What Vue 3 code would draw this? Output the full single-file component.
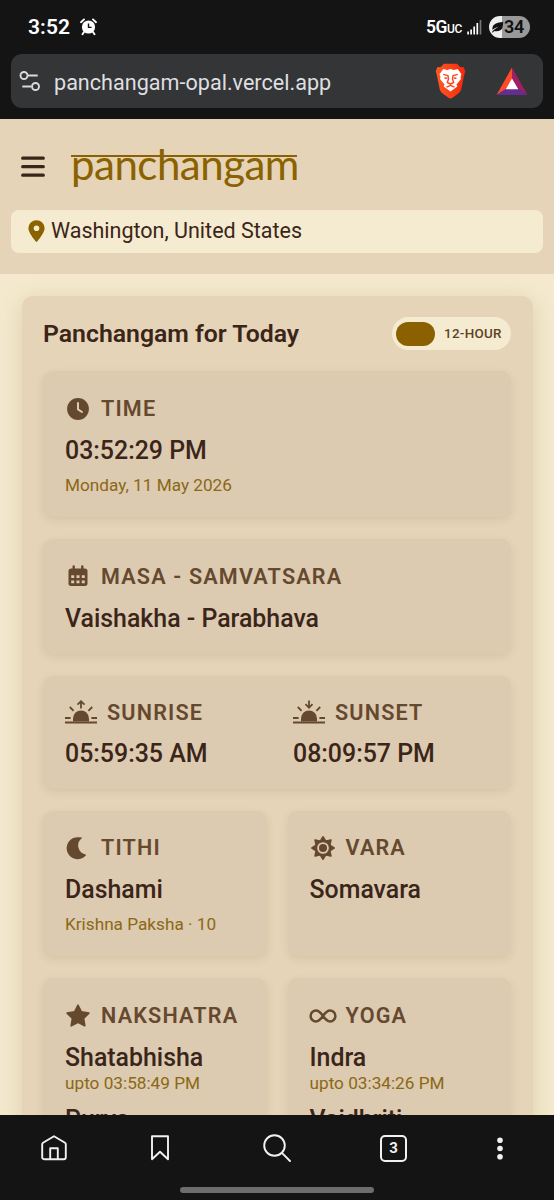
<script setup>
const nakshatra = [
  { name: 'Shatabhisha', until: 'upto 03:58:49 PM' },
  { name: 'Purva', until: '' },
]
const yoga = [
  { name: 'Indra', until: 'upto 03:34:26 PM' },
  { name: 'Vaidhriti', until: '' },
]
const rays = [0, 45, 90, 135, 180, 225, 270, 315]
</script>

<template>
  <div class="screen">
    <div class="chrome-top">
      <div class="status">
        <span class="clock">3:52</span>
        <svg class="alarm" width="17" height="18" viewBox="0 0 17 18">
          <circle cx="8.500" cy="9" r="6.600" fill="#fff" />
          <path d="M1 4.200 4 1.400M16 4.200 13 1.400M4 14 2.500 16.200M13 14l1.500 2.200" stroke="#fff" stroke-width="1.900" stroke-linecap="round" fill="none" />
          <path d="M8.500 5.400V9.400H11.600" stroke="#141414" stroke-width="1.400" fill="none" />
        </svg>
        <span class="net">5G<small>UC</small></span>
        <svg class="signal" width="15" height="16" viewBox="0 0 15 16">
          <path d="M1.100 12.500V15.500M4.100 10.500V15.500M7.200 7.500V15.500M10.300 4V15.500" stroke="#fff" stroke-width="1.700" />
          <path d="M13.500 1V15.500" stroke="#777" stroke-width="1.700" />
        </svg>
        <span class="battery">
          <svg width="13" height="12" viewBox="0 0 13 12">
            <path d="M.8 11.200C2.200 9.300 4 7.700 7.500 5.800 4.500 6.700 2.700 7.900 1.600 9 .5 4.500 4 1.200 12.200 1c-.1 2-.3 4.200-1 6.300C10.300 9.800 6 10.800 3.300 9.900L1.800 11.500Z" fill="#111" />
          </svg>
          <b>34</b>
        </span>
      </div>
      <div class="address">
        <svg class="tune" width="22" height="20" viewBox="0 0 22 20" fill="none" stroke="#d9dadb" stroke-width="1.900">
          <circle cx="5" cy="4.500" r="3.500" /><path d="M8.400 4.500H18.700M3.300 15.500H12.200" />
          <circle cx="16.500" cy="15.500" r="3.500" />
        </svg>
        <span class="url">panchangam-opal.vercel.app</span>
        <svg class="brave" width="31" height="36" viewBox="0 0 31 36">
          <defs>
            <linearGradient id="lion"><stop offset="0" stop-color="#ff5a24" /><stop offset="1" stop-color="#f5280c" /></linearGradient>
          </defs>
          <path d="M9 .8H22L25.500 4.300 28.500 4 30.300 8.200 29.300 11.500 26.200 26.500Q25.500 29 23 30.800L17.500 34.800Q15.500 36 13.500 34.800L8 30.800Q5.500 29 4.800 26.500L1.700 11.500.7 8.200 2.500 4 5.500 4.300Z" fill="url(#lion)" />
          <path d="M8.300 6.100 12.200 6.900 15.500 6 18.800 6.900 22.700 6.100 26.500 11.200 25.500 14 26 16 21.500 21.500 22.300 23.500 15.500 28.500 8.700 23.500 9.500 21.500 5 16 5.500 14 4.500 11.200Z" fill="#fff" />
          <path d="M8.300 11.300 13 12.600 13.500 16 12.300 19.500 15.500 21 18.700 19.500 17.500 16 18 12.600 22.700 11.300M9.500 15.300 12.200 15M21.500 15.300 18.800 15M11.500 24.200 15.500 22.300 19.500 24.200" stroke="#fb4520" stroke-width="1.400" fill="none" stroke-linejoin="round" />
        </svg>
        <svg class="bat" width="32" height="29" viewBox="0 0 32 29">
          <path d="M16 .5V12L10 22 .5 28Z" fill="#ff4b2b" />
          <path d="M16 .5 31.500 28 22 22 16 12Z" fill="#9e1f63" />
          <path d="M.5 28 10 22H22L31.500 28Z" fill="#662d91" />
          <path d="M16 11.500 22.300 22.300H9.700Z" fill="#fff" />
        </svg>
      </div>
    </div>

    <header class="site-head">
      <div class="brand-row">
        <svg class="menu" width="24" height="22" viewBox="0 0 24 22">
          <path d="M1.700 2.200H22.300M1.700 10.700H22.300M1.700 19.200H22.300" stroke="#3b2519" stroke-width="3.200" stroke-linecap="round" />
        </svg>
        <div class="brand"><span>panchangam</span></div>
      </div>
      <div class="location">
        <svg width="17" height="22" viewBox="0 0 17 22">
          <path fill-rule="evenodd" d="M8.500.2A8.100 8.100 0 0 0 .4 8.300C.4 12.500 6 19.300 7.700 21.400Q8.500 22.200 9.300 21.400C11 19.300 16.600 12.500 16.600 8.300A8.100 8.100 0 0 0 8.500.2ZM8.500 5.500A2.800 2.800 0 1 1 8.500 11.100 2.800 2.800 0 0 1 8.500 5.500Z" fill="#8b6200" />
        </svg>
        <span>Washington, United States</span>
      </div>
    </header>

    <main class="page">
      <section class="panel">
        <div class="panel-head">
          <h2>Panchangam for Today</h2>
          <div class="toggle"><i></i><span>12-HOUR</span></div>
        </div>

        <div class="cards">
          <article class="card wide">
            <div class="label">
              <svg width="26" height="26" viewBox="0 0 26 26"><circle cx="13" cy="13" r="10.900" fill="#65492f" /><path d="M13 7V13.300L17 16" stroke="#dccab1" stroke-width="2" stroke-linecap="round" stroke-linejoin="round" fill="none" /></svg>
              <span>TIME</span>
            </div>
            <div class="value">03:52:29 PM</div>
            <div class="sub">Monday, 11 May 2026</div>
          </article>

          <article class="card wide">
            <div class="label">
              <svg width="26" height="26" viewBox="0 0 26 26">
                <path d="M6.200 5.500H19.800Q22.500 5.500 22.500 8V20.500Q22.500 23 19.800 23H6.200Q3.500 23 3.500 20.500V8Q3.500 5.500 6.200 5.500Z" fill="#65492f" />
                <path d="M8.700 3.500V7M17.300 3.500V7" stroke="#65492f" stroke-width="2.400" stroke-linecap="round" />
                <path d="M6.200 12.300h3v2.600h-3zM11.500 12.300h3v2.600h-3zM16.800 12.300h3v2.600h-3zM6.200 17.600h3v2.600h-3zM11.500 17.600h3v2.600h-3zM16.800 17.600h3v2.600h-3z" fill="#dccab1" />
              </svg>
              <span>MASA - SAMVATSARA</span>
            </div>
            <div class="value">Vaishakha - Parabhava</div>
          </article>

          <article class="card wide sun">
            <div>
              <div class="label">
                <svg width="32" height="26" viewBox="0 0 32 26" fill="none" stroke="#65492f" stroke-width="1.800">
                  <path d="M8 21.500V18.500A8 8 0 0 1 24 18.500V21.500Z" fill="#65492f" stroke="none" />
                  <path d="M0 22.500H32M0 18H5.600M26.400 18H32M4.800 7 8.600 10.800M27.200 7 23.400 10.800M16 8.500V1.500M12.500 4.600 16 1.200 19.500 4.600" />
                </svg>
                <span>SUNRISE</span>
              </div>
              <div class="value">05:59:35 AM</div>
            </div>
            <div>
              <div class="label">
                <svg width="32" height="26" viewBox="0 0 32 26" fill="none" stroke="#65492f" stroke-width="1.800">
                  <path d="M8 21.500V18.500A8 8 0 0 1 24 18.500V21.500Z" fill="#65492f" stroke="none" />
                  <path d="M0 22.500H32M0 18H5.600M26.400 18H32M4.800 7 8.600 10.800M27.200 7 23.400 10.800M16 .5V7.500M12.500 4.200 16 7.800 19.500 4.200" />
                </svg>
                <span>SUNSET</span>
              </div>
              <div class="value">08:09:57 PM</div>
            </div>
          </article>

          <article class="card">
            <div class="label">
              <svg width="26" height="26" viewBox="0 0 26 26"><path d="M13.800 2.200A11 11 0 1 0 21 20.300Q21.300 19.500 20.500 19.400A9 9 0 0 1 16.500 3.600Q17.500 3 16.700 2.600 15.300 2.100 13.800 2.200Z" fill="#65492f" /></svg>
              <span>TITHI</span>
            </div>
            <div class="value">Dashami</div>
            <div class="sub">Krishna Paksha · 10</div>
          </article>

          <article class="card">
            <div class="label">
              <svg width="26" height="26" viewBox="0 0 26 26">
                <path v-for="a in rays" :key="a" d="M9.300 6.200 12.200 1.500Q13 .3 13.800 1.500L16.700 6.200Z" fill="#65492f" :transform="`rotate(${a} 13 13)`" />
                <circle cx="13" cy="13" r="7" fill="#dccab1" stroke="#65492f" stroke-width="2.300" />
                <circle cx="13" cy="13" r="4" fill="#65492f" />
              </svg>
              <span>VARA</span>
            </div>
            <div class="value">Somavara</div>
          </article>

          <article class="card">
            <div class="label">
              <svg width="26" height="26" viewBox="0 0 26 26"><path d="M13 2.300 16.300 8.900 23.800 10.100 18.500 15.300 19.700 22.700 13 19.300 6.300 22.700 7.500 15.300 2.200 10.100 9.700 8.900Z" fill="#65492f" stroke="#65492f" stroke-width="1.800" stroke-linejoin="round" /></svg>
              <span>NAKSHATRA</span>
            </div>
            <div v-for="n in nakshatra" :key="n.name" class="entry">
              <div class="value">{{ n.name }}</div>
              <div class="until">{{ n.until }}</div>
            </div>
          </article>

          <article class="card">
            <div class="label">
              <svg class="infinity" width="26" height="26" viewBox="0 0 26 26"><path d="M13 13C10.500 9.500 9 7.600 6 7.600A5.400 5.400 0 0 0 6 18.400C9 18.400 10.500 16.500 13 13S17 7.600 20 7.600A5.400 5.400 0 0 1 20 18.400C17 18.400 15.500 16.500 13 13Z" fill="none" stroke="#65492f" stroke-width="2.500" /></svg>
              <span>YOGA</span>
            </div>
            <div v-for="y in yoga" :key="y.name" class="entry">
              <div class="value">{{ y.name }}</div>
              <div class="until">{{ y.until }}</div>
            </div>
          </article>
        </div>
      </section>
    </main>

    <nav class="chrome-bottom">
      <div class="tabs">
        <svg width="26" height="26" viewBox="0 0 26 26" fill="none" stroke="#f1f1f1" stroke-width="1.900" stroke-linejoin="round"><path d="M3.200 24.200Q1.200 24.200 1.200 22.200V9.300Q1.200 8.300 2 7.800L13 1.300 24 7.800Q24.800 8.300 24.800 9.300V22.200Q24.800 24.200 22.800 24.200ZM9.200 24V13.300H16.800V24" /></svg>
        <svg width="18" height="26" viewBox="0 0 18 26" fill="none" stroke="#f1f1f1" stroke-width="1.900" stroke-linejoin="round"><path d="M1 1.300H17V24.200L9 16.800 1 24.200Z" /></svg>
        <svg width="28" height="28" viewBox="0 0 28 28" fill="none" stroke="#f1f1f1" stroke-width="1.900" stroke-linecap="round"><circle cx="11.500" cy="11.500" r="10.300" /><path d="M18.900 18.900 27 27" /></svg>
        <span class="count">3</span>
        <svg width="6" height="23" viewBox="0 0 6 23" fill="#f1f1f1"><circle cx="3" cy="3.300" r="2.800" /><circle cx="3" cy="11.500" r="2.800" /><circle cx="3" cy="19.700" r="2.800" /></svg>
      </div>
      <div class="handle"></div>
    </nav>
  </div>
</template>

<style>
body {
  margin: 0;
}
</style>

<style scoped>
.screen {
  width: 554px;
  height: 1200px;
  overflow: hidden;
  display: flex;
  flex-direction: column;
  background: #f4e9ce;
  font-family: Roboto, "Noto Sans", sans-serif;
  color: #3b2519;
}
svg {
  display: block;
  flex: none;
}
.chrome-top {
  flex: none;
  height: 119px;
  box-sizing: border-box;
  background: #141414;
  padding: 0 11px;
}
.status {
  height: 54px;
  box-sizing: border-box;
  padding: 0 13px 1px 17px;
  display: flex;
  align-items: center;
  color: #fff;
}
.clock {
  font-size: 21px;
  font-weight: 600;
  line-height: 24px;
  letter-spacing: 0.1px;
  width: 52px;
}
.net {
  margin-left: auto;
  font-size: 17.5px;
  font-weight: 600;
  letter-spacing: -0.4px;
}
.net small {
  font-size: 12px;
  font-weight: 500;
}
.signal {
  margin: 0 7px 0 5px;
}
.battery {
  width: 41px;
  height: 22px;
  border-radius: 11px;
  box-sizing: border-box;
  padding-left: 2px;
  background: linear-gradient(90deg, #eee 0 13.5px, #999 13.5px);
  color: #111;
  display: flex;
  align-items: center;
}
.battery b {
  font-size: 18px;
  font-weight: 600;
  letter-spacing: -0.4px;
}
.address {
  height: 54px;
  border-radius: 11px;
  background: #343537;
  display: flex;
  align-items: center;
}
.tune {
  margin-left: 8px;
}
.url {
  margin-left: 13px;
  flex: 1;
  font-size: 21.6px;
  line-height: 30px;
  color: #dedfe0;
  padding-top: 3px;
}
.brave {
  margin-right: 30px;
}
.bat {
  margin-right: 15px;
}
.site-head {
  flex: none;
  height: 155px;
  box-sizing: border-box;
  background: #e5d4b8;
  padding: 0 11px;
}
.brand-row {
  height: 91px;
  display: flex;
  align-items: flex-start;
}
.menu {
  margin: 37px 0 0 10px;
}
.brand {
  margin: 36px 0 0 26px;
  width: 226px;
  height: 40px;
  border-top: 2px solid #8b6200;
  color: #8b6200;
}
.brand span {
  display: block;
  font-family: Lato, "Open Sans", sans-serif;
  font-size: 42px;
  line-height: 40px;
  letter-spacing: -0.5px;
  margin-top: -13px;
}
.location {
  height: 43px;
  box-sizing: border-box;
  border-radius: 8px;
  background: #f5ebd0;
  padding-left: 17px;
  display: flex;
  align-items: center;
  gap: 6px;
  font-size: 21.5px;
}
.location svg {
  margin-top: -1px;
}
.location span {
  padding-bottom: 2px;
}
.page {
  flex: 1;
  min-height: 0;
  padding: 22px 21px 0 22px;
  overflow: hidden;
}
.panel {
  height: 1000px;
  box-sizing: border-box;
  border-radius: 11px;
  padding: 22px 22px 0 21px;
  background: #e5d4b8;
  box-shadow: 0 5px 22px rgba(139, 120, 50, 0.22);
}
.panel-head {
  height: 32px;
  display: flex;
  align-items: center;
  justify-content: space-between;
}
h2 {
  margin: 0;
  font-size: 24.8px;
  font-weight: 600;
  line-height: 32px;
}
.toggle {
  width: 119px;
  height: 33px;
  margin-top: -1px;
  box-sizing: border-box;
  padding: 0 4px;
  border-radius: 17px;
  background: #f5ebd0;
  display: flex;
  align-items: center;
  gap: 9px;
  font-size: 13.4px;
  font-weight: 500;
  letter-spacing: 0.3px;
  color: #5c4326;
}
.toggle i {
  width: 39px;
  height: 24px;
  border-radius: 12px;
  background: #8b6000;
}
.cards {
  margin-top: 21.4px;
  display: grid;
  grid-template-columns: 1fr 1fr;
  gap: 22px 21px;
}
.card {
  padding: 22.2px 22px 20px;
  border-radius: 10px;
  background: #dccab1;
  box-shadow: 0 3px 9px rgba(110, 75, 25, 0.11);
}
.wide {
  grid-column: span 2;
}
.label {
  height: 30px;
  display: flex;
  align-items: center;
  gap: 10px;
  color: #65492f;
  font-size: 21.6px;
  font-weight: 600;
  letter-spacing: 1.17px;
  white-space: nowrap;
}
.infinity {
  overflow: visible;
}
.value {
  margin-top: 12.4px;
  font-size: 24.9px;
  font-weight: 500;
  line-height: 30px;
}
.sub {
  margin-top: 7px;
  margin-bottom: 0;
  font-size: 17.2px;
  line-height: 24px;
  color: #8b6814;
}
.sun {
  display: grid;
  grid-template-columns: 228px 1fr;
}
.sun .value {
  margin-top: 11px;
}
.entry + .entry .value {
  margin-top: 11px;
}
.until {
  margin-top: -1px;
  font-size: 17.2px;
  line-height: 22px;
  color: #8b6814;
}
.chrome-bottom {
  flex: none;
  height: 85px;
  background: #141414;
}
.tabs {
  height: 66px;
  display: grid;
  grid-template-columns: 108px 104px 130px 103px 109px;
  align-items: center;
  justify-items: center;
}
.count {
  width: 27px;
  height: 27px;
  box-sizing: border-box;
  border: 2px solid #f1f1f1;
  border-radius: 5px;
  color: #f1f1f1;
  font-size: 15px;
  font-weight: 700;
  line-height: 23px;
  text-align: center;
}
.handle {
  width: 194px;
  height: 6px;
  margin: 6px auto 0;
  border-radius: 3px;
  background: #6d6d6d;
}
</style>
